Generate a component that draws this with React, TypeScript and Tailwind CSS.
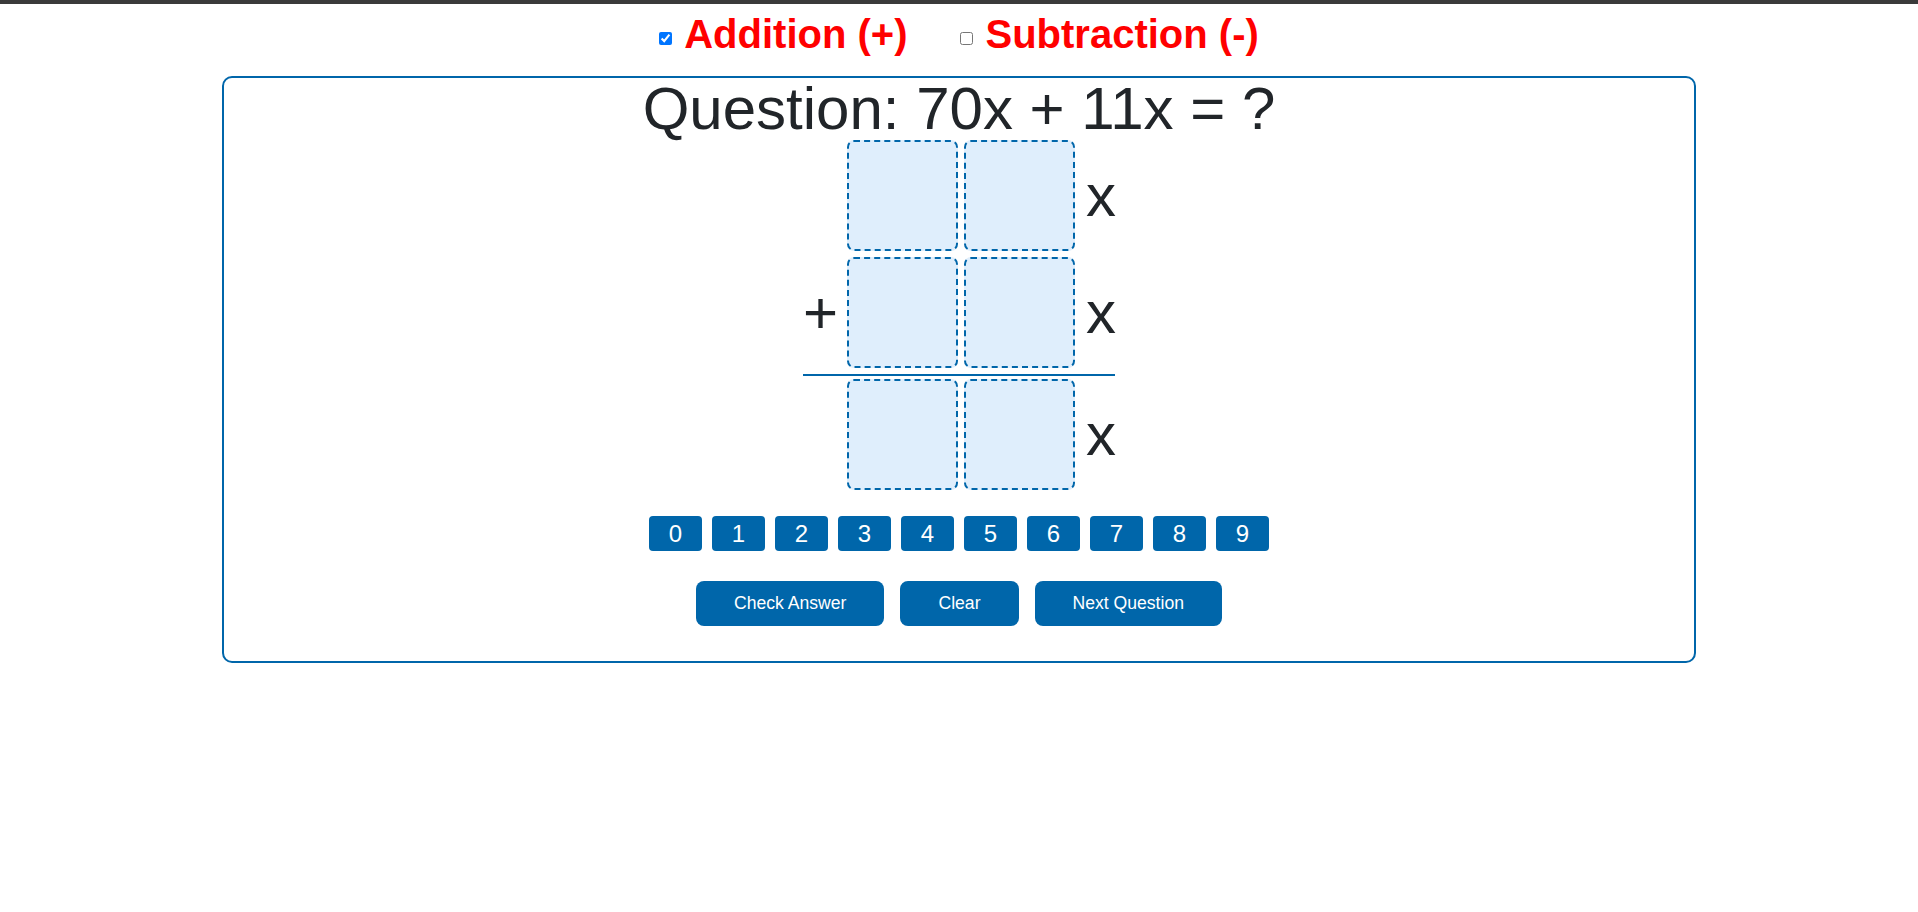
import { useState } from 'react';

const digits = [0, 1, 2, 3, 4, 5, 6, 7, 8, 9];

const AnswerBox = () => (
  <div className="w-[111px] h-[111px] rounded-[7px] border-2 border-dashed border-[#0066aa] bg-[#dfeefc]" />
);

const Row = ({ sign }: { sign?: string }) => (
  <div className="flex items-center w-[312px] h-[111px]">
    <div className="w-[44px] text-[60px] leading-[69px] text-[#212529]">{sign}</div>
    <AnswerBox />
    <div className="w-[6px]" />
    <AnswerBox />
    <div className="w-[40px] pl-[11px] text-[60px] leading-[69px] text-[#212529]">x</div>
  </div>
);

const App = () => {
  const [addition, setAddition] = useState(true);
  const [subtraction, setSubtraction] = useState(false);

  return (
    <div className="min-h-screen bg-white font-['Liberation_Sans',Arial,sans-serif]">
      <div className="h-[4px] bg-[#3a3a3a]" />

      {/* operation toggles */}
      <div className="pt-[7px] text-center text-[40px] font-bold text-[#ff0000] leading-[46px]">
        <label>
          <input
            type="checkbox"
            checked={addition}
            onChange={(e) => setAddition(e.target.checked)}
            className="relative -top-[3px] mr-[12px]"
          />
          Addition (+)
        </label>
        <label className="ml-[53px]">
          <input
            type="checkbox"
            checked={subtraction}
            onChange={(e) => setSubtraction(e.target.checked)}
            className="relative -top-[3px] mr-[12px]"
          />
          Subtraction (-)
        </label>
      </div>

      {/* question card */}
      <div className="mx-auto mt-[19px] w-[1474px] rounded-[10px] border-2 border-[#0066aa] pb-[35px]">
        <h1 className="text-center text-[60px] leading-[62px] text-[#212529]">Question: 70x + 11x = ?</h1>

        <div className="mx-auto flex w-[312px] flex-col">
          <Row />
          <div className="mt-[6px]">
            <Row sign="+" />
          </div>
          <div className="mt-[6px] h-[2px] bg-[#0066aa]" />
          <div className="mt-[3px]">
            <Row />
          </div>
        </div>

        <div className="mt-[26px] flex justify-center gap-[10px]">
          {digits.map((d) => (
            <button
              key={d}
              className="h-[35px] w-[53px] rounded-[4px] bg-[#0066aa] text-[24px] leading-[35px] text-white"
            >
              {d}
            </button>
          ))}
        </div>

        <div className="mt-[30px] flex justify-center gap-[16px]">
          <button className="h-[45px] rounded-[8px] bg-[#0066aa] px-[38px] text-[17.6px] text-white">Check Answer</button>
          <button className="h-[45px] rounded-[8px] bg-[#0066aa] px-[38px] text-[17.6px] text-white">Clear</button>
          <button className="h-[45px] rounded-[8px] bg-[#0066aa] px-[38px] text-[17.6px] text-white">Next Question</button>
        </div>
      </div>
    </div>
  );
};

export default App;
